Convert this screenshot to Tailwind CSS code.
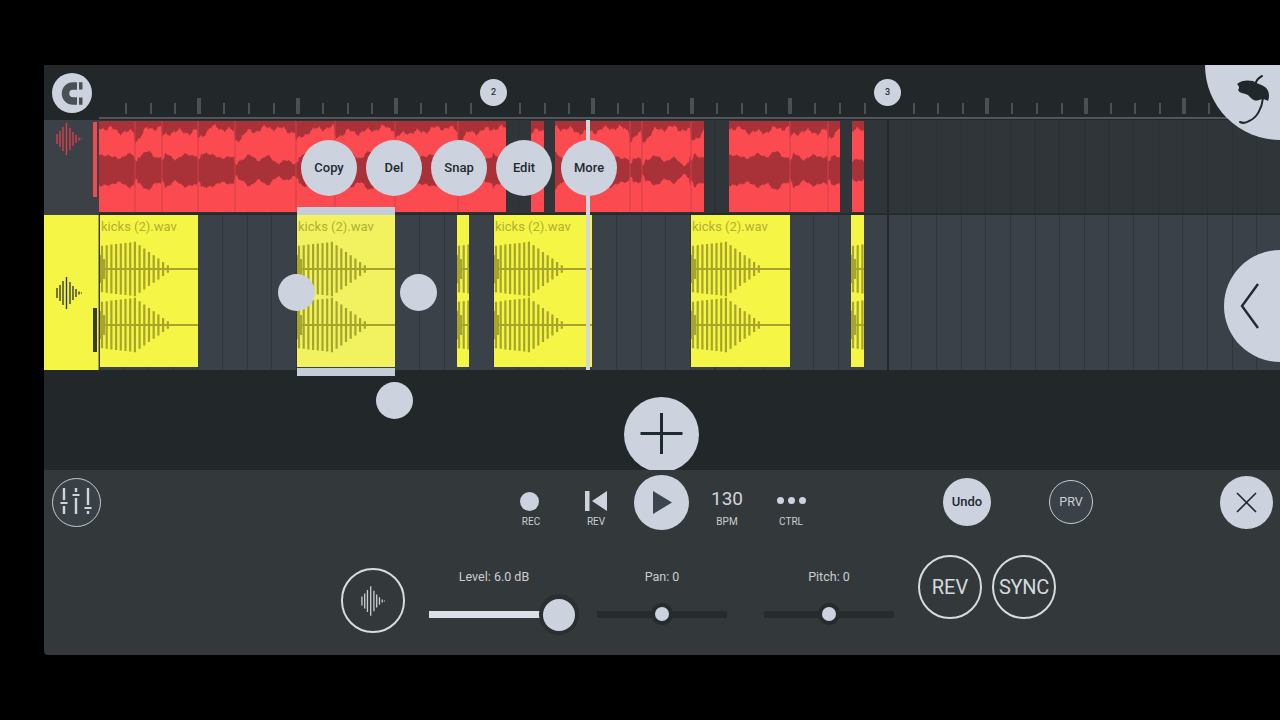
<!DOCTYPE html>
<html>

<head>
    <title>Playlist</title>
    <script src="https://cdn.jsdelivr.net/npm/@tailwindcss/browser@4"></script>
</head>

<body class="bg-black h-screen overflow-hidden pt-[65px] pl-[44px] font-['Roboto',sans-serif]">
    <svg class="hidden">
        <symbol id="wave" viewBox="0 0 26 34">
            <path fill="none" stroke="currentColor" stroke-width="1.4"
                d="M1 12V22M4 9V25M7 5V29M10.500 1V33M14 6V28M17 10V24M20 13V21M23 15.500V18.500M25.500 16.500V17.500" />
        </symbol>
    </svg>

    <div id="app" class="w-[1236px] h-[590px] flex flex-col overflow-hidden rounded-bl-sm">
        <div class="relative h-[405px] shrink-0 bg-[#222829]">
            <!-- ruler -->
            <div class="relative h-[55px]">
                <div id="ticks" class="absolute inset-0"></div>
                <div class="absolute left-[55px] right-0 top-[52px] h-[2px] bg-[#50565a]"></div>
            </div>

            <!-- red lane -->
            <div class="flex h-[95px]">
                <div class="relative w-[55px] bg-[#3b4146] text-[#d8404a]">
                    <svg class="absolute left-[12px] top-[2px] w-[26px] h-[34px]"><use href="#wave" /></svg>
                    <div class="absolute left-[49px] top-[2px] w-[4px] h-[75px] bg-[#f04a50]"></div>
                </div>
                <div id="redLane"
                    class="relative flex-1 border-b-2 border-[#262c2e] bg-[#2f3538] bg-[repeating-linear-gradient(90deg,#2a3033_0,#2a3033_1px,transparent_1px,transparent_24.62px)]">
                </div>
            </div>

            <!-- yellow lane -->
            <div class="flex h-[155px]">
                <div class="relative w-[55px] bg-[#f5f546] text-[#3a3f35] border-r border-[#a5a52b]">
                    <svg class="absolute left-[12px] top-[61px] w-[26px] h-[34px]"><use href="#wave" /></svg>
                    <div class="absolute left-[49px] top-[93px] w-[4px] h-[44px] bg-[#3a3a38]"></div>
                </div>
                <div id="yellowLane"
                    class="relative flex-1 bg-[#3a4148] bg-[repeating-linear-gradient(90deg,#30363b_0,#30363b_1px,transparent_1px,transparent_24.62px)]">
                </div>
            </div>

            <!-- playhead and bar divider -->
            <div class="absolute left-[542px] top-[55px] w-[4px] h-[250px] bg-[#d3d6da]"></div>
            <div class="absolute left-[843px] top-[55px] w-[2px] h-[250px] bg-[#23292b]"></div>

            <!-- selected clip handles -->
            <div class="absolute left-[253px] top-[142px] w-[98px] h-[8px] bg-[#c5cdd8]"></div>
            <div class="absolute left-[253px] top-[303px] w-[98px] h-[8px] bg-[#c5cdd8]"></div>
            <div class="absolute left-[234px] top-[209px] w-[37px] h-[37px] rounded-full bg-[#ccd3df]"></div>
            <div class="absolute left-[356px] top-[209px] w-[37px] h-[37px] rounded-full bg-[#ccd3df]"></div>
            <div class="absolute left-[332px] top-[317px] w-[37px] h-[37px] rounded-full bg-[#ccd3df]"></div>

            <!-- clip menu -->
            <div class="absolute left-[257px] top-[75px] flex gap-[9px] text-[13px] font-medium text-[#1f2a30]">
                <div class="w-[56px] h-[56px] rounded-full bg-[#ccd3df] flex items-center justify-center">Copy</div>
                <div class="w-[56px] h-[56px] rounded-full bg-[#ccd3df] flex items-center justify-center">Del</div>
                <div class="w-[56px] h-[56px] rounded-full bg-[#ccd3df] flex items-center justify-center">Snap</div>
                <div class="w-[56px] h-[56px] rounded-full bg-[#ccd3df] flex items-center justify-center">Edit</div>
                <div class="w-[56px] h-[56px] rounded-full bg-[#ccd3df] flex items-center justify-center">More</div>
            </div>

            <!-- snap magnet -->
            <div class="absolute left-[8px] top-[8px] w-[40px] h-[40px] rounded-full bg-[#ccd3df]">
                <svg class="w-[40px] h-[40px]" viewBox="52 73 40 40">
                    <path fill="none" stroke="#4a5054" stroke-width="7.500" d="M77 86H73A7.500 7.500 0 0 0 73 101H77" />
                    <path fill="#4a5054" d="M79 82.200H82.500V89.500H79ZM79 97.500H82.500V104.800H79Z" />
                </svg>
            </div>

            <!-- bar markers -->
            <div class="absolute left-[436px] top-[14px] w-[27px] h-[27px] rounded-full bg-[#ccd3df] flex items-center justify-center text-[9px] font-medium text-[#2a3035]">2</div>
            <div class="absolute left-[830px] top-[14px] w-[27px] h-[27px] rounded-full bg-[#ccd3df] flex items-center justify-center text-[9px] font-medium text-[#2a3035]">3</div>

            <!-- FL logo corner -->
            <div class="absolute left-[1161px] top-0 w-[75px] h-[75px] rounded-bl-[75px] bg-[#ccd3df]">
                <svg class="w-[75px] h-[75px]" viewBox="1205 65 75 75">
                    <path fill="#20282c"
                        d="M1237 84C1241 80 1248 80 1253 81C1257 84 1261 84 1265 87C1269 90 1270 96 1268 101C1265 99 1262 99 1259 100C1254 102 1251 98 1248 95C1245 93 1240 94 1238 90C1240 88 1239 86 1237 84Z" />
                    <path fill="none" stroke="#20282c" stroke-width="2" stroke-linecap="round"
                        d="M1262 76C1258 78 1256 81 1255 85M1263 98C1262 108 1257 118 1249 121C1246 123 1242 123 1240 122" />
                </svg>
            </div>

            <!-- side arrow -->
            <div class="absolute left-[1180px] top-[185px] w-[56px] h-[112px] rounded-l-[56px] bg-[#ccd3df]">
                <svg class="w-[56px] h-[112px]" viewBox="1224 250 56 112">
                    <path fill="none" stroke="#1f2a36" stroke-width="2.400" d="M1258 284L1242 306L1258 328" />
                </svg>
            </div>

            <!-- add clip -->
            <div class="absolute left-[580px] top-[332px] w-[75px] h-[75px] rounded-full bg-[#ccd3df]">
                <svg class="w-[75px] h-[75px]" viewBox="0 0 75 75">
                    <path fill="none" stroke="#1f2a30" stroke-width="3" d="M37.500 16V57M16.500 36.500H58.500" />
                </svg>
            </div>
        </div>

        <!-- bottom panel -->
        <div class="relative flex-1 bg-[#33393b] text-[#c9ced2]">
            <div class="flex items-center h-[64px]">
                <div class="ml-[8px] w-[49px] h-[49px] shrink-0 rounded-full border border-[#c5cbd0] bg-[#3a4146]">
                    <svg class="w-[47px] h-[47px]" viewBox="53 479 47 47">
                        <path fill="none" stroke="#d0d4d8" stroke-width="2.400"
                            d="M64 488V500M64 506V514M76 488V492M76 498V514M88 488V505M88 511V514" />
                        <path fill="none" stroke="#d0d4d8" stroke-width="2.200" d="M60.500 503H67.500M72.500 495H79.500M84.500 508H91.500" />
                    </svg>
                </div>

                <div class="ml-[410px] w-[40px] mt-[14px] flex flex-col items-center">
                    <div class="h-[22px] flex items-center mr-[4px]"><div class="w-[19px] h-[19px] rounded-full bg-[#ccd3df]"></div></div>
                    <span class="mt-[4px] text-[10px] leading-[12px]">REC</span>
                </div>
                <div class="ml-[25px] w-[40px] mt-[14px] flex flex-col items-center">
                    <div class="h-[22px] flex items-center">
                        <svg class="w-[22px] h-[20px]" viewBox="0 0 22 20"><path fill="#ccd3df" d="M0 0H4.500V20H0ZM22 0V20L7 10Z" /></svg>
                    </div>
                    <span class="mt-[4px] text-[10px] leading-[12px]">REV</span>
                </div>
                <div class="ml-[18px] w-[55px] h-[55px] shrink-0 rounded-full bg-[#ccd3df] flex items-center justify-center">
                    <svg class="ml-[2px] w-[19px] h-[23px]" viewBox="0 0 19 23"><path fill="#3c4450" d="M0 0L19 11.500L0 23Z" /></svg>
                </div>
                <div class="ml-[18px] w-[40px] mt-[14px] flex flex-col items-center">
                    <div class="h-[22px] flex items-center text-[19px] text-[#d0d5d9] -translate-y-[2px]">130</div>
                    <span class="mt-[4px] text-[10px] leading-[12px]">BPM</span>
                </div>
                <div class="ml-[24px] w-[40px] mt-[14px] flex flex-col items-center">
                    <div class="h-[22px] flex items-center gap-[4px] -translate-y-[1px]">
                        <div class="w-[7px] h-[7px] rounded-full bg-[#ccd3df]"></div>
                        <div class="w-[7px] h-[7px] rounded-full bg-[#ccd3df]"></div>
                        <div class="w-[7px] h-[7px] rounded-full bg-[#ccd3df]"></div>
                    </div>
                    <span class="mt-[4px] text-[10px] leading-[12px]">CTRL</span>
                </div>

                <div class="ml-[132px] w-[48px] h-[48px] shrink-0 rounded-full bg-[#ccd3df] flex items-center justify-center text-[13px] font-medium text-[#1f2a30]">Undo</div>
                <div class="ml-[58px] w-[44px] h-[44px] shrink-0 rounded-full border border-[#c5cbd0] bg-[#3a4148] flex items-center justify-center text-[12.500px]">PRV</div>
                <div class="ml-[127px] w-[53px] h-[53px] shrink-0 rounded-full bg-[#ccd3df] flex items-center justify-center">
                    <svg class="w-[21px] h-[21px]" viewBox="0 0 21 21"><path fill="none" stroke="#1f2a30" stroke-width="1.600" d="M1 1L20 20M20 1L1 20" /></svg>
                </div>
            </div>

            <div class="flex items-start">
                <div class="ml-[297px] mt-[34px] w-[64px] h-[65px] shrink-0 rounded-full border-2 border-[#d8dcdd] flex items-center justify-center text-[#c9ced2]">
                    <svg class="w-[24px] h-[32px]"><use href="#wave" /></svg>
                </div>

                <div class="ml-[24px] mt-[35px] w-[130px] shrink-0">
                    <div class="text-[12.500px] leading-[16px] text-center">Level: 6.0 dB</div>
                    <div class="relative mt-[26px] h-[7px] w-[111px] bg-[#dbe0e6]">
                        <div class="absolute left-[110px] top-[-17px] w-[40px] h-[41px] rounded-full bg-[#2a3032] flex items-center justify-center">
                            <div class="w-[32px] h-[32px] rounded-full bg-[#ccd3df]"></div>
                        </div>
                    </div>
                </div>
                <div class="ml-[38px] mt-[35px] w-[130px] shrink-0">
                    <div class="text-[12.500px] leading-[16px] text-center">Pan: 0</div>
                    <div class="relative mt-[26px] h-[7px] bg-[#262c2e]">
                        <div class="absolute left-[54px] top-[-8px] w-[22px] h-[22px] rounded-full bg-[#262c2e] flex items-center justify-center">
                            <div class="w-[14px] h-[14px] rounded-full bg-[#ccd3df]"></div>
                        </div>
                    </div>
                </div>
                <div class="ml-[37px] mt-[35px] w-[130px] shrink-0">
                    <div class="text-[12.500px] leading-[16px] text-center">Pitch: 0</div>
                    <div class="relative mt-[26px] h-[7px] bg-[#262c2e]">
                        <div class="absolute left-[54px] top-[-8px] w-[22px] h-[22px] rounded-full bg-[#262c2e] flex items-center justify-center">
                            <div class="w-[14px] h-[14px] rounded-full bg-[#ccd3df]"></div>
                        </div>
                    </div>
                </div>

                <div class="ml-[24px] mt-[21px] w-[64px] h-[64px] shrink-0 rounded-full border-2 border-[#d8dcdd] flex items-center justify-center text-[20px] text-[#d4d9de]">REV</div>
                <div class="ml-[10px] mt-[21px] w-[64px] h-[64px] shrink-0 rounded-full border-2 border-[#d8dcdd] flex items-center justify-center text-[20px] tracking-[-0.3px] text-[#d4d9de]">SYNC</div>
            </div>
        </div>
    </div>

    <script>
        // ruler ticks, beat is 24.62px and starts at x=125 on the page
        var ticks = "";
        for (var i = 0; i < 47; i++) {
            if (i % 16 == 15) continue; // bar number sits here
            var x = 125 + i * 24.62 - 44;
            var big = i % 4 == 3;
            ticks += '<div class="absolute bg-[#4a5053]" style="left:' + (big ? x - 1.5 : x) + 'px;top:' + (big ? 33 : 38) + 'px;width:' + (big ? 4 : 2) + 'px;height:' + (big ? 16 : 11) + 'px"></div>';
        }
        document.getElementById("ticks").innerHTML = ticks;

        function noise(x) {
            return Math.sin(x * 0.9) * 0.5 + Math.sin(x * 0.37 + 1) * 0.8 + Math.sin(x * 2.3) * 0.4 + Math.sin(x * 0.11) * 0.9;
        }

        var redCuts = [135, 162, 198, 235, 296, 335, 395, 458, 630, 642, 691, 790, 828];

        // how far x is past the last cut, the sample hits hardest right after one
        function sinceCut(x) {
            var d = 99;
            redCuts.forEach(function (c) { if (x >= c && x - c < d) d = x - c; });
            return d;
        }

        function redWave(x0, w) {
            var top = "M0 0", upper = "", lower = "";
            for (var i = 0; i <= w; i++) {
                var x = x0 + i;
                var s = sinceCut(x);
                var dip = s < 12 ? (12 - s) * 0.8 : 0;
                top += "L" + i + " " + (9 + noise(x) * 2.6 + dip).toFixed(1);
                var a = 14.5 + noise(x + 40) * 1.6 + Math.sin(x * 0.31) * 1.8;
                var p = (x - 99) % 197;
                if (p > 110) a -= (p - 110) * 0.07;
                if (s < 3) a -= 5;
                upper += (i ? "L" : "M") + i + " " + (49 - a).toFixed(1);
                lower = "L" + i + " " + (49 + a * 1.05).toFixed(1) + lower;
            }
            return top + "L" + w + " 0Z" + upper + lower + "Z";
        }

        var redClips = [[99, 407], [531, 13], [555, 149], [729, 111], [852, 12]];
        var red = "";
        redClips.forEach(function (c) {
            var lines = "";
            redCuts.forEach(function (x) {
                if (x > c[0] && x < c[0] + c[1]) lines += "M" + (x - c[0]) + " 0V91";
            });
            red += '<div class="absolute top-[1px] h-[91px] bg-[#fb4b50] overflow-hidden" style="left:' + (c[0] - 99) + 'px;width:' + c[1] + 'px">'
                + '<svg class="w-full h-full"><path fill="#a83238" d="' + redWave(c[0], c[1]) + '" /><path stroke="#d04048" fill="none" d="' + lines + '" /></svg></div>';
        });
        document.getElementById("redLane").innerHTML = red;

        // kick sample: decaying bars for the first 72px, flat line after that
        function kickWave(w, mid) {
            var d = "M0 " + mid + "H" + w;
            for (var i = 0; i < 16; i++) {
                var x = 2 + i * 4.7;
                if (x > w) break;
                var a = x < 35 ? 23 + x * 0.12 : 27 * (1 - (x - 35) / 38);
                d += "M" + x.toFixed(1) + " " + (mid - a).toFixed(1) + "V" + (mid + a).toFixed(1);
            }
            return d + "M0.500 " + (mid - 14) + "V" + (mid + 14) + "M4 " + (mid - 10) + "V" + (mid + 10);
        }

        var yellowClips = [[100, 98], [297, 98, true], [457, 12], [494, 98], [691, 99], [851, 13]];
        var yellow = "";
        yellowClips.forEach(function (c) {
            var bg = c[2] ? "bg-[#f2f260]" : "bg-[#f5f546]";
            yellow += '<div class="absolute top-0 h-[152px] overflow-hidden ' + bg + '" style="left:' + (c[0] - 99) + 'px;width:' + c[1] + 'px">';
            if (c[1] > 20) yellow += '<div class="absolute left-[1px] top-[5px] text-[13px] leading-[14px] whitespace-nowrap text-[#b0b032]">kicks (2).wav</div>';
            yellow += '<svg class="w-full h-full"><path fill="none" stroke="#a5a52b" stroke-width="2.200" d="' + kickWave(c[1], 54) + kickWave(c[1], 110) + '" /></svg></div>';
        });
        document.getElementById("yellowLane").innerHTML = yellow;
    </script>
</body>

</html>
